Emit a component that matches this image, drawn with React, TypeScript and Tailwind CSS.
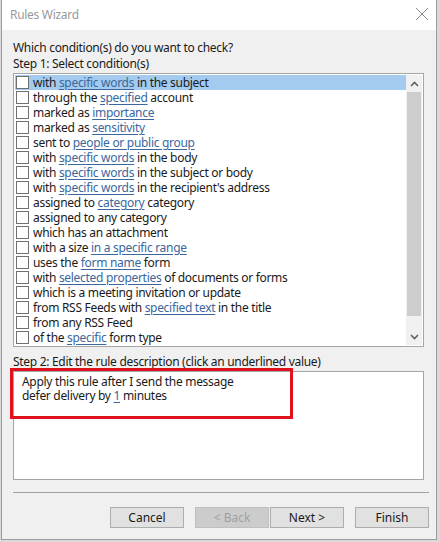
import React from "react";

type Part = { text: string; link?: boolean };

// each condition is a run of plain text and underlined values
const conditions: Part[][] = [
  [{ text: "with " }, { text: "specific words", link: true }, { text: " in the subject" }],
  [{ text: "through the " }, { text: "specified", link: true }, { text: " account" }],
  [{ text: "marked as " }, { text: "importance", link: true }],
  [{ text: "marked as " }, { text: "sensitivity", link: true }],
  [{ text: "sent to " }, { text: "people or public group", link: true }],
  [{ text: "with " }, { text: "specific words", link: true }, { text: " in the body" }],
  [{ text: "with " }, { text: "specific words", link: true }, { text: " in the subject or body" }],
  [{ text: "with " }, { text: "specific words", link: true }, { text: " in the recipient's address" }],
  [{ text: "assigned to " }, { text: "category", link: true }, { text: " category" }],
  [{ text: "assigned to any category" }],
  [{ text: "which has an attachment" }],
  [{ text: "with a size " }, { text: "in a specific range", link: true }],
  [{ text: "uses the " }, { text: "form name", link: true }, { text: " form" }],
  [{ text: "with " }, { text: "selected properties", link: true }, { text: " of documents or forms" }],
  [{ text: "which is a meeting invitation or update" }],
  [{ text: "from RSS Feeds with " }, { text: "specified text", link: true }, { text: " in the title" }],
  [{ text: "from any RSS Feed" }],
  [{ text: "of the " }, { text: "specific", link: true }, { text: " form type" }],
];

const Link = ({ children }: { children: React.ReactNode }) => (
  <span className="text-[#3b679c] underline underline-offset-[2px] decoration-[#3b679c]">{children}</span>
);

const Button = ({ label, disabled }: { label: string; disabled?: boolean }) => (
  <button
    className={
      disabled
        ? "w-[74px] h-[21px] border border-[#bfbfbf] bg-[#cccccc] text-[#a0a0a0] text-[12px] leading-none"
        : "w-[74px] h-[21px] border border-[#adadad] bg-[#e1e1e1] text-[#1a1a1a] text-[12px] leading-none"
    }
  >
    {label}
  </button>
);

export default function App() {
  return (
    <div
      className="w-[440px] h-[542px] bg-[#d9d9d9] pl-[1px] overflow-hidden tracking-[-0.3px]"
      style={{ fontFamily: '"Noto Sans", "Open Sans", sans-serif' }}
    >
      <div className="relative w-[436px] h-[540px] border-l border-r border-b border-[#9c9c9c] bg-[#f0f0f0] flex flex-col">
        {/* title bar */}
        <div className="h-[30px] bg-white flex items-center justify-between pl-[8px] pr-[5px]">
          <span className="text-[12px] text-[#9a9a9a]">Rules Wizard</span>
          <svg width="14" height="14" viewBox="0 0 14 14" className="mr-[2px] -mt-[2px]">
            <path d="M1 1 L13 13 M13 1 L1 13" stroke="#8a8a8a" strokeWidth="1" />
          </svg>
        </div>

        <div className="flex flex-col pl-[11px] pr-[12px] pt-[10px] text-[12px] leading-[16px] text-[#1a1a1a]">
          <div>Which condition(s) do you want to check?</div>
          <div>Step 1: Select condition(s)</div>

          {/* condition list */}
          <div className="mt-[1px] h-[274px] border border-[#a5a5a5] bg-white flex p-[1px]">
            <div className="flex-1 flex flex-col">
              {conditions.map((parts, i) => (
                <div
                  key={i}
                  className={`h-[15px] flex items-center pl-[1px] ${i === 0 ? "bg-[#a3cbef]" : ""}`}
                >
                  <span className="w-[13px] h-[13px] border border-[#707070] bg-white shrink-0" />
                  <span className="ml-[4px] leading-[15px] whitespace-nowrap">
                    {parts.map((p, j) => (p.link ? <Link key={j}>{p.text}</Link> : <span key={j}>{p.text}</span>))}
                  </span>
                </div>
              ))}
            </div>
            <div className="w-[16px] bg-[#f0f0f0] flex flex-col">
              <div className="h-[17px] flex items-center justify-center">
                <svg width="9" height="6" viewBox="0 0 9 6">
                  <path d="M1 5 L4.5 1.5 L8 5" fill="none" stroke="#606060" strokeWidth="1.6" />
                </svg>
              </div>
              <div className="h-[224px] bg-[#cdcdcd] mx-[1px]" />
              <div className="flex-1" />
              <div className="h-[17px] flex items-center justify-center">
                <svg width="9" height="6" viewBox="0 0 9 6">
                  <path d="M1 1 L4.5 4.5 L8 1" fill="none" stroke="#606060" strokeWidth="1.6" />
                </svg>
              </div>
            </div>
          </div>

          <div className="mt-[7px]">Step 2: Edit the rule description (click an underlined value)</div>

          {/* rule description */}
          <div className="mt-[1px] h-[109px] border border-[#a5a5a5] bg-white pl-[8px] pt-[3px] leading-[14px]">
            <div>Apply this rule after I send the message</div>
            <div>
              defer delivery by <Link>1</Link> minutes
            </div>
          </div>

          <div className="mt-[12px] mr-[-5px] h-px bg-[#a0a0a0]" />

          <div className="mt-[14px] mr-[-5px] flex justify-end tracking-normal">
            <Button label="Cancel" />
            <div className="ml-[11px] flex gap-[1px]">
              <Button label="< Back" disabled />
              <Button label="Next >" />
            </div>
            <div className="ml-[11px]">
              <Button label="Finish" />
            </div>
          </div>
        </div>

        {/* highlight frame drawn over the description */}
        <div className="absolute left-[8px] top-[368px] w-[283px] h-[51px] border-[3px] border-[#e0131c]" />
      </div>
    </div>
  );
}
